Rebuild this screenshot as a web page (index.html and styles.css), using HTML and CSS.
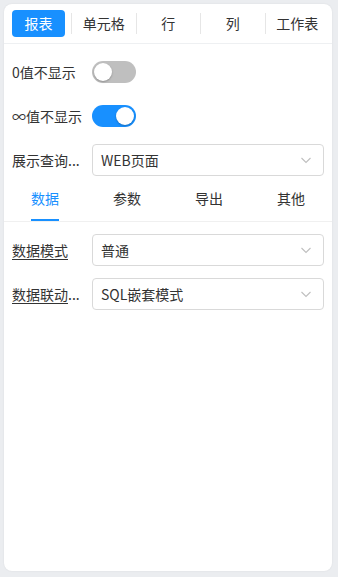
FILE: index.html
```html
<!DOCTYPE html>
<html lang="zh-CN">
<head>
  <meta charset="UTF-8" />
  <meta name="viewport" content="width=device-width, initial-scale=1.0"/>
  <title>报表属性</title>
  <link rel="stylesheet" href="styles.css">
</head>
<body>

  <div class="panel">
    <!-- Top tabs -->
    <div class="top-tabs">
      <div class="top-tab active">报表</div>
      <span class="sep"></span>
      <div class="top-tab">单元格</div>
      <span class="sep"></span>
      <div class="top-tab">行</div>
      <span class="sep"></span>
      <div class="top-tab">列</div>
      <span class="sep"></span>
      <div class="top-tab">工作表</div>
    </div>

    <div class="form">
      <div class="row">
        <div class="label">0值不显示</div>
        <div class="switch"><span class="knob"></span></div>
      </div>
      <div class="row">
        <div class="label">∞值不显示</div>
        <div class="switch on"><span class="knob"></span></div>
      </div>
      <div class="row">
        <div class="label">展示查询...</div>
        <div class="select">
          <span>WEB页面</span>
          <svg class="arrow" width="12" height="12" viewBox="0 0 12 12"><path d="M1.5 4 L6 8.5 L10.5 4" fill="none" stroke="#bfbfbf" stroke-width="1.1"/></svg>
        </div>
      </div>
    </div>

    <!-- Sub tabs -->
    <div class="sub-tabs">
      <div class="sub-tab active"><span>数据</span></div>
      <div class="sub-tab"><span>参数</span></div>
      <div class="sub-tab"><span>导出</span></div>
      <div class="sub-tab"><span>其他</span></div>
    </div>

    <div class="form data">
      <div class="row">
        <div class="label"><span class="u">数据模式</span></div>
        <div class="select">
          <span>普通</span>
          <svg class="arrow" width="12" height="12" viewBox="0 0 12 12"><path d="M1.5 4 L6 8.5 L10.5 4" fill="none" stroke="#bfbfbf" stroke-width="1.1"/></svg>
        </div>
      </div>
      <div class="row">
        <div class="label"><span class="u">数据联动</span>...</div>
        <div class="select">
          <span>SQL嵌套模式</span>
          <svg class="arrow" width="12" height="12" viewBox="0 0 12 12"><path d="M1.5 4 L6 8.5 L10.5 4" fill="none" stroke="#bfbfbf" stroke-width="1.1"/></svg>
        </div>
      </div>
    </div>
  </div>

</body>
</html>
```

FILE: styles.css
```css
* {
  margin: 0;
  padding: 0;
  box-sizing: border-box;
}

body {
  background: #ebedf0;
  font-family: "Noto Sans CJK SC", "Noto Sans", sans-serif;
  font-size: 14px;
  color: #333;
  padding: 4px 6px 6px 4px;
}

.panel {
  background: #fff;
  border-radius: 8px;
  height: 567px;
  box-shadow: 0 0 2px rgba(0, 0, 0, 0.08);
}

/* top tabs */
.top-tabs {
  display: flex;
  align-items: center;
  padding: 6px 3px 6px 8px;
  border-bottom: 1px solid #eef0f2;
}

.top-tab {
  flex: 1;
  height: 27px;
  line-height: 27px;
  text-align: center;
  color: #333;
}

.top-tab.active {
  flex: 0 0 53px;
  background: #1890ff;
  color: #fff;
  border-radius: 4px;
  margin-right: 6px;
}

.sep {
  width: 1px;
  height: 21px;
  background: #e6e6e6;
}

/* form rows */
.form {
  padding: 6px 8px 0 8px;
}

.row {
  display: flex;
  align-items: center;
  height: 44px;
}

.label {
  width: 80px;
  white-space: nowrap;
  line-height: 20px;
}

.label .u {
  text-decoration: underline;
  text-underline-offset: 3px;
  text-decoration-color: #333;
}

.switch {
  position: relative;
  width: 44px;
  height: 22px;
  border-radius: 11px;
  background: #bfbfbf;
}

.switch .knob {
  position: absolute;
  top: 2px;
  left: 2px;
  width: 18px;
  height: 18px;
  border-radius: 50%;
  background: #fff;
  box-shadow: 0 1px 2px rgba(0, 0, 0, 0.25);
}

.switch.on {
  background: #1890ff;
}

.switch.on .knob {
  left: 24px;
}

.select {
  flex: 1;
  height: 32px;
  border: 1px solid #d9d9d9;
  border-radius: 4px;
  display: flex;
  align-items: center;
  justify-content: space-between;
  padding: 0 11px 0 8px;
  color: #333;
}

.arrow {
  display: block;
}

/* sub tabs */
.sub-tabs {
  display: flex;
  border-bottom: 1px solid #f0f0f0;
}

.sub-tab {
  flex: 1;
  text-align: center;
  height: 39px;
  padding-top: 5px;
}

.sub-tab span {
  display: inline-block;
  height: 34px;
  line-height: 22px;
}

.sub-tab.active span {
  color: #1890ff;
  border-bottom: 2px solid #1890ff;
}

.form.data {
  padding-top: 6px;
}
```
